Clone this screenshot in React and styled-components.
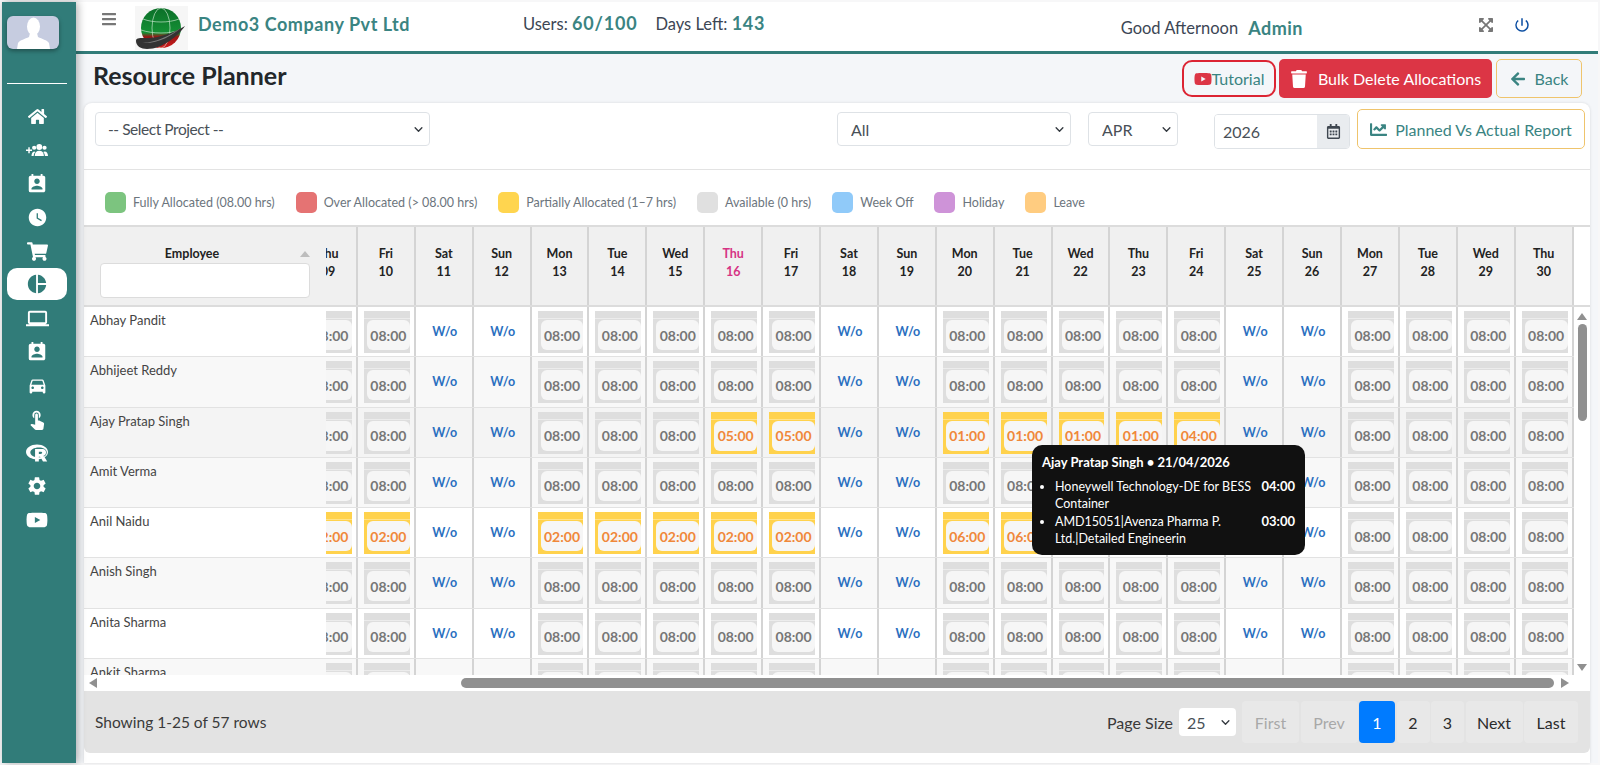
import React from 'react';
import styled, { createGlobalStyle } from 'styled-components';
import { FaHome, FaShoppingCart, FaRProject, FaYoutube, FaExpandArrowsAlt, FaTrash, FaArrowLeft, FaBars, FaRegCalendarAlt, FaChartLine } from 'react-icons/fa';
import { MdPermContactCalendar, MdWatchLater, MdPieChart, MdLaptop, MdDirectionsCar, MdTouchApp, MdSettings, MdPowerSettingsNew } from 'react-icons/md';

const TEAL = '#317c79';
const TEAL_TEXT = '#3a8482';
const ROW_HEIGHT = 50.3;
const chevron = `url("data:image/svg+xml,%3csvg xmlns='http://www.w3.org/2000/svg' viewBox='0 0 16 16'%3e%3cpath fill='none' stroke='%23343a40' stroke-linecap='round' stroke-linejoin='round' stroke-width='2.4' d='m2 5 6 6 6-6'/%3e%3c/svg%3e")`;

const GlobalStyle = createGlobalStyle`
  html, body { margin: 0; height: 765px; overflow: hidden; }
  body { background: #f7f7f8; font-family: "Lato", "Noto Sans", sans-serif; color: #343a40; }
  * { box-sizing: border-box; }
`;

const Page = styled.div`
  display: flex;
  height: 765px;
  padding: 2px 2px 2px 2px;
`;

const Sidebar = styled.aside`
  width: 74px;
  flex: none;
  background: ${TEAL};
  padding: 14px 9px 0 5px;
  box-shadow: 2px 0 8px rgba(0, 0, 0, 0.3);
  position: relative;
  z-index: 3;
`;

const Avatar = styled.div`
  width: 52px;
  height: 33px;
  background: #c6cce0;
  border-radius: 6px;
  box-shadow: 0 2px 4px rgba(0, 0, 0, 0.35);
  overflow: hidden;
  display: flex;
`;

const SideRule = styled.div`
  height: 1px;
  background: #fff;
  margin-top: 34px;
  margin-bottom: 16px;
`;

const NavItem = styled.div`
  height: ${p => (p.$active ? '32px' : '33.6px')};
  margin-bottom: ${p => (p.$active ? '1.6px' : '0')};
  display: flex;
  align-items: center;
  justify-content: center;
  color: ${p => (p.$active ? TEAL : '#fff')};
  background: ${p => (p.$active ? '#fff' : 'transparent')};
  border-radius: 10px;
  font-size: 20px;
`;

const Main = styled.div`
  flex: 1;
  min-width: 0;
  display: flex;
  flex-direction: column;
  background: #f4f6f9;
`;

const TopBar = styled.header`
  height: 52px;
  flex: none;
  display: flex;
  align-items: flex-start;
  background: #fff;
  border-bottom: 3px solid ${TEAL};
  padding-left: 25px;
`;

const MenuButton = styled.div`
  color: #777;
  font-size: 16px;
  margin-top: 9px;
  display: flex;
`;

const Logo = styled.div`
  width: 53px;
  height: 44px;
  margin: 4px 0 0 18px;
  background: #f6f6f6;
  display: flex;
`;

const Company = styled.div`
  margin: 11px 0 0 10px;
  font-size: 18px;
  line-height: 22px;
  font-weight: 700;
  letter-spacing: 0.55px;
  color: ${TEAL_TEXT};
  white-space: nowrap;
`;

const Stats = styled.div`
  margin: 9px 0 0 113px;
  display: flex;
  gap: 18px;
  font-size: 16.5px;
  line-height: 24px;
  color: #3c4654;
`;

const Strong = styled.b`
  color: ${TEAL_TEXT};
  font-size: 18px;
  font-weight: 700;
  letter-spacing: 0.5px;
`;

const StatValue = styled(Strong)`
  letter-spacing: 0.8px;
`;

const Greeting = styled.div`
  margin: 14px 0 0 auto;
  font-size: 16.5px;
  line-height: 24px;
  color: #3c4654;
  white-space: nowrap;
  display: flex;
  gap: 10px;
`;

const HeaderIcons = styled.div`
  margin: 14px 67px 0 175px;
  display: flex;
  gap: 19px;
  align-items: center;
  font-size: 16px;
`;

const TitleRow = styled.div`
  height: 49px;
  flex: none;
  display: flex;
  align-items: center;
  padding: 0 16px 0 17px;
`;

const Title = styled.h1`
  margin: 0 auto 7px 0;
  font-size: 25px;
  font-weight: 700;
  color: #22272b;
`;

const TutorialButton = styled.button`
  width: 94px;
  height: 37px;
  border: 2px solid #dc2433;
  border-radius: 10px;
  background: #f4f6f9;
  color: ${TEAL_TEXT};
  font: 400 16px "Lato", sans-serif;
  display: flex;
  align-items: center;
  justify-content: center;
  padding: 0;
  margin-right: 3px;
  svg { color: #dc3545; font-size: 18px; }
`;

const DangerButton = styled.button`
  width: 213px;
  height: 39px;
  border: 0;
  border-radius: 5px;
  background: #dc3545;
  color: #fff;
  font: 400 16px "Lato", sans-serif;
  display: flex;
  align-items: center;
  justify-content: center;
  gap: 10px;
  margin-right: 4px;
  svg { font-size: 18px; }
`;

const OutlineButton = styled.button`
  height: ${p => p.$h || 39}px;
  width: ${p => p.$w}px;
  border: 1px solid #efc46c;
  border-radius: 5px;
  background: ${p => p.$bg || '#f4f6f9'};
  color: ${TEAL_TEXT};
  font: 400 16px "Lato", sans-serif;
  display: flex;
  align-items: center;
  justify-content: center;
  gap: ${p => p.$gap || 9}px;
  padding: 0;
  flex: none;
`;

const Card = styled.section`
  flex: 1;
  min-height: 0;
  margin: 0 8px;
  background: #fff;
  border-radius: 8px 8px 0 0;
  box-shadow: 0 0 3px rgba(0, 0, 0, 0.12);
  position: relative;
  overflow: hidden;
`;

const Toolbar = styled.div`
  height: 67px;
  display: flex;
  align-items: flex-start;
  padding: 6px 5px 0 11px;
  border-bottom: 1px solid #e3e3e3;
`;

const Select = styled.select`
  appearance: none;
  height: 34px;
  width: ${p => p.$w}px;
  margin: ${p => p.$m || '3px 0 0 0'};
  padding: 0 20px 0 13px;
  border: 1px solid #dee2e6;
  border-radius: 4px;
  color: #495057;
  background: #fff ${chevron} no-repeat right 5px center / 11px 9px;
  font: 400 16px "Lato", sans-serif;
  flex: none;
`;

const ProjectSelect = styled(Select)`
  padding-left: 12px;
  font-size: 15.5px;
  letter-spacing: -0.45px;
`;

const PageSizeSelect = styled(Select)`
  height: 28px;
  margin: 0;
  padding: 0 0 0 8px;
  border: 0;
`;

const DateGroup = styled.div`
  margin: 5px 7px 0 36px;
  width: 136px;
  height: 35px;
  display: flex;
  flex: none;
  border: 1px solid #dee2e6;
  border-radius: 4px;
  overflow: hidden;
`;

const DateInput = styled.input`
  width: 102px;
  border: 0;
  padding: 0 0 0 8px;
  color: #495057;
  font: 400 16px "Lato", sans-serif;
  outline: none;
`;

const DateAddon = styled.div`
  flex: 1;
  background: #e9ecef;
  color: #3f4750;
  display: flex;
  align-items: center;
  justify-content: center;
  font-size: 15px;
`;

const Legend = styled.div`
  height: 55px;
  display: flex;
  align-items: center;
  gap: 21px;
  padding: 9px 0 0 21px;
`;

const LegendItem = styled.div`
  display: flex;
  align-items: center;
  gap: 7px;
  font-size: 12.5px;
  color: #6c757d;
  white-space: nowrap;
`;

const Swatch = styled.span`
  width: 21px;
  height: 21px;
  border-radius: 5px;
  background: ${p => p.$c};
`;

const Grid = styled.div`
  display: flex;
  height: 450px;
  border-top: 2px solid #dcdcdc;
  overflow: hidden;
`;

const Frozen = styled.div`
  width: 242px;
  flex: none;
  position: relative;
  z-index: 2;
  box-shadow: inset 6px 0 6px -6px rgba(0, 0, 0, 0.18);
`;

const EmployeeHead = styled.div`
  height: 80px;
  background: #f0f0f0;
  border-bottom: 2px solid #dcdcdc;
  padding: 18px 16px 0 16px;
  position: relative;
`;

const HeadLabel = styled.div`
  text-align: center;
  padding-right: 26px;
  font-size: 12.5px;
  font-weight: 700;
  line-height: 18px;
  color: #222;
`;

const SortCaret = styled.span`
  position: absolute;
  top: 24px;
  right: 16px;
  border-left: 5px solid transparent;
  border-right: 5px solid transparent;
  border-bottom: 6px solid #bdbdbd;
`;

const SearchBox = styled.input`
  display: block;
  width: 100%;
  height: 35px;
  border: 1px solid #dcdcdc;
  border-radius: 4px;
  background: #fff;
`;

const NameCell = styled.div`
  height: ${ROW_HEIGHT}px;
  padding: 4px 10px 4px 6px;
  background: ${p => p.$bg};
  border-bottom: 1px solid #e2e2e2;
  font-size: 13px;
  line-height: 18px;
  color: #444;
`;

const DaysPane = styled.div`
  width: 1248px;
  flex: none;
  overflow: hidden;
`;

const DaysTrack = styled.div`
  width: ${22 * 57.9}px;
  margin-left: -26px;
`;

const HeadRow = styled.div`
  display: flex;
  height: 80px;
  background: #f0f0f0;
  border-bottom: 2px solid #dcdcdc;
`;

const HeadCell = styled.div`
  width: 57.9px;
  flex: none;
  padding-top: 18px;
  text-align: center;
  font-size: 12.5px;
  font-weight: 700;
  line-height: 18px;
  color: ${p => (p.$today ? '#d63384' : '#222')};
  border-right: 2px solid #d4d4d4;
`;

const BodyRow = styled.div`
  display: flex;
  height: ${ROW_HEIGHT}px;
  background: ${p => p.$bg};
  border-bottom: 1px solid #e2e2e2;
`;

const DayCell = styled.div`
  width: 57.9px;
  flex: none;
  border-right: 2px solid #d4d4d4;
  padding: 4px 4px 0 6px;
  display: flex;
  justify-content: center;
`;

const Hours = styled.div`
  width: 46px;
  height: 42px;
  padding: 9px 0 3px 3px;
  display: flex;
  background: linear-gradient(${p => p.$tone} 0 7px, ${p => p.$line} 7px 8px, ${p => p.$tone} 8px);
`;

const HoursInner = styled.div`
  flex: 1;
  display: flex;
  align-items: center;
  justify-content: center;
  background: #f6f6f6;
  border-radius: 6px;
  font-size: 14px;
  font-weight: 700;
  color: ${p => p.$ink};
`;

const WeekOff = styled.div`
  margin-top: 12px;
  font-size: 12.5px;
  line-height: 18px;
  font-weight: 700;
  color: #2a6fc0;
`;

const VBar = styled.div`
  width: 16px;
  flex: none;
  display: flex;
  flex-direction: column;
  align-items: center;
`;

const VCorner = styled.div`
  height: 80px;
  width: 100%;
  flex: none;
  border-bottom: 2px solid #dcdcdc;
  margin-bottom: 6px;
`;

const Arrow = styled.span`
  flex: none;
  width: 0;
  height: 0;
  border-style: solid;
  border-color: transparent;
  ${p => p.$dir === 'up' && 'border-width: 0 5px 7px; border-bottom-color: #909090;'}
  ${p => p.$dir === 'down' && 'border-width: 7px 5px 0; border-top-color: #909090; margin-top: auto; margin-bottom: 4px;'}
  ${p => p.$dir === 'left' && 'border-width: 5px 8px 5px 0; border-right-color: #909090;'}
  ${p => p.$dir === 'right' && 'border-width: 5px 0 5px 8px; border-left-color: #909090;'}
`;

const VThumb = styled.div`
  width: 9px;
  height: 97px;
  margin-top: 4px;
  border-radius: 5px;
  background: #909090;
`;

const HBar = styled.div`
  height: 16px;
  display: flex;
  align-items: center;
  padding: 0 21px 0 5px;
`;

const HThumb = styled.div`
  width: 1093px;
  height: 10px;
  margin: 0 7px 0 auto;
  border-radius: 5px;
  background: #909090;
`;

const Footer = styled.div`
  height: 62px;
  background: #e3e3e3;
  border-radius: 0 0 6px 6px;
  display: flex;
  align-items: center;
  padding: 0 12px 0 11px;
`;

const RowCount = styled.div`
  font-size: 15.5px;
  color: #3a3a3a;
  margin-right: auto;
`;

const PageLabel = styled.span`
  font-size: 16px;
  color: #3a3a3a;
  margin-right: 6px;
`;

const Pager = styled.div`
  display: flex;
  gap: 1.5px;
  margin-left: 6px;
`;

const PageButton = styled.button`
  width: ${p => p.$w}px;
  height: 42px;
  border: 0;
  border-radius: 4px;
  padding: 0;
  background: ${p => (p.$active ? '#007bff' : '#e8e8e8')};
  color: ${p => (p.$active ? '#fff' : p.$off ? '#a8a8a8' : '#2b2b2b')};
  font: 400 16px "Lato", sans-serif;
`;

const Tooltip = styled.div`
  position: absolute;
  left: 948px;
  top: 342px;
  width: 273px;
  height: 110px;
  padding: 8px 10px;
  border-radius: 10px;
  background: #111;
  color: #fff;
  font-size: 13px;
  line-height: 18px;
  z-index: 5;
`;

const TipTitle = styled.div`
  font-weight: 700;
  margin-bottom: 7px;
`;

const TipList = styled.ul`
  margin: 0;
  padding: 0 0 0 13px;
  font-size: 12.5px;
  line-height: 17.4px;
`;

const TipLine = styled.div`
  display: flex;
  justify-content: space-between;
  align-items: flex-start;
  gap: 5px;
  b { flex: none; font-size: 13px; }
`;

function GroupAddIcon() {
  return (
    <svg viewBox="0 0 24 16" width="22" height="15" fill="currentColor">
      <path d="M0 7h2.5V4.5h1.6V7h2.5v1.6H4.1v2.5H2.5V8.6H0z" />
      <circle cx="14.5" cy="4.2" r="3.2" />
      <circle cx="20.2" cy="5" r="2.3" />
      <circle cx="8.9" cy="5" r="2.3" />
      <path d="M9.5 14c0-3.6 2-5.6 5-5.6s5 2 5 5.6z" />
      <path d="M20.6 14H24c0-3-1.4-5-3.6-5-.7 0-1.2.2-1.7.5 1.2 1.1 1.9 2.6 1.9 4.5z" />
      <path d="M8.4 14H6c0-2.6 1-4.6 2.9-5 .5 0 1 .2 1.4.5-1.2 1.1-1.9 2.6-1.9 4.5z" />
    </svg>
  );
}

const NAV = [
  { Icon: FaHome, size: 19 },
  { Icon: GroupAddIcon },
  { Icon: MdPermContactCalendar, size: 22 },
  { Icon: MdWatchLater, size: 21 },
  { Icon: FaShoppingCart, size: 21 },
  { Icon: MdPieChart, size: 22, active: true },
  { Icon: MdLaptop, size: 23 },
  { Icon: MdPermContactCalendar, size: 22 },
  { Icon: MdDirectionsCar, size: 21 },
  { Icon: MdTouchApp, size: 22 },
  { Icon: FaRProject, size: 22 },
  { Icon: MdSettings, size: 22 },
  { Icon: FaYoutube, size: 22 },
];

const LEGEND = [
  ['#7cc47f', 'Fully Allocated (08.00 hrs)'],
  ['#e57373', 'Over Allocated (> 08.00 hrs)'],
  ['#ffd54f', 'Partially Allocated (1–7 hrs)'],
  ['#e0e0e0', 'Available (0 hrs)'],
  ['#90caf9', 'Week Off'],
  ['#ce93d8', 'Holiday'],
  ['#ffcc80', 'Leave'],
];

const WEEK = ['Thu', 'Fri', 'Sat', 'Sun', 'Mon', 'Tue', 'Wed'];
const DAYS = Array.from({ length: 22 }, (_, i) => {
  const name = WEEK[i % 7];
  return { name, date: String(i + 9).padStart(2, '0'), off: name === 'Sat' || name === 'Sun', today: i + 9 === 16 };
});

const ROWS = [
  { name: 'Abhay Pandit', bg: '#fff' },
  { name: 'Abhijeet Reddy', bg: '#f8f8f8' },
  { name: 'Ajay Pratap Singh', bg: '#f4f4f4', hours: { 16: '05:00', 17: '05:00', 20: '01:00', 21: '01:00', 22: '01:00', 23: '01:00', 24: '04:00' } },
  { name: 'Amit Verma', bg: '#f8f8f8' },
  { name: 'Anil Naidu', bg: '#fff', hours: { 9: '02:00', 10: '02:00', 13: '02:00', 14: '02:00', 15: '02:00', 16: '02:00', 17: '02:00', 20: '06:00', 21: '06:00' } },
  { name: 'Anish Singh', bg: '#f8f8f8' },
  { name: 'Anita Sharma', bg: '#fff' },
  { name: 'Ankit Sharma', bg: '#f8f8f8' },
];

function Silhouette() {
  return (
    <svg viewBox="0 0 52 33" width="52" height="33">
      <ellipse cx="26.5" cy="10.5" rx="6.5" ry="9" fill="#fff" />
      <path d="M23 17h7l1 4c4 2 9 3 11 6l1 6H10l1-6c2-3 7-4 11-6z" fill="#fff" />
    </svg>
  );
}

function CompanyLogo() {
  return (
    <svg viewBox="0 0 53 44" width="53" height="44">
      <defs>
        <linearGradient id="globe" x1="0" y1="0" x2="0" y2="1">
          <stop offset="0" stopColor="#0b6f28" />
          <stop offset="0.62" stopColor="#149035" />
          <stop offset="0.72" stopColor="#9a1515" />
          <stop offset="1" stopColor="#d01c1c" />
        </linearGradient>
      </defs>
      <circle cx="26" cy="22" r="20" fill="url(#globe)" />
      <g fill="none" stroke="#dff3e2" strokeWidth="0.7" opacity="0.85">
        <ellipse cx="26" cy="22" rx="9" ry="20" />
        <path d="M8 13c10 4 26 4 36 0M6 24c12 4 28 4 40 0" />
      </g>
      <path d="M1 35c0-3 3-3 7-3 14 1 30-5 42-12-6 9-22 23-38 23-6 0-11-3-11-8z" fill="#333" />
      <path d="M3 36c10 3 30-4 44-15-12 11-30 19-44 15z" fill="#7d7d7d" />
    </svg>
  );
}

function DayValue({ day, row }) {
  if (day.off) return <WeekOff>W/o</WeekOff>;
  const value = row.hours && row.hours[Number(day.date)];
  return (
    <Hours $tone={value ? '#ffd24d' : '#dedede'} $line={value ? '#ffe289' : '#ececec'}>
      <HoursInner $ink={value ? '#f0883a' : '#777'}>{value || '08:00'}</HoursInner>
    </Hours>
  );
}

export default function App() {
  return (
    <>
      <GlobalStyle />
      <Page>
        <Sidebar>
          <Avatar><Silhouette /></Avatar>
          <SideRule />
          {NAV.map(({ Icon, size, active }, i) => (
            <NavItem key={i} $active={active}><Icon size={size} /></NavItem>
          ))}
        </Sidebar>
        <Main>
          <TopBar>
            <MenuButton><FaBars /></MenuButton>
            <Logo><CompanyLogo /></Logo>
            <Company>Demo3 Company Pvt Ltd</Company>
            <Stats>
              <span>Users: <StatValue>60/100</StatValue></span>
              <span>Days Left: <StatValue>143</StatValue></span>
            </Stats>
            <Greeting>Good Afternoon <Strong>Admin</Strong></Greeting>
            <HeaderIcons>
              <FaExpandArrowsAlt color="#777" />
              <MdPowerSettingsNew color="#0b4ea2" size={18} />
            </HeaderIcons>
          </TopBar>
          <TitleRow>
            <Title>Resource Planner</Title>
            <TutorialButton><FaYoutube />Tutorial</TutorialButton>
            <DangerButton><FaTrash />Bulk Delete Allocations</DangerButton>
            <OutlineButton $w={86}><FaArrowLeft />Back</OutlineButton>
          </TitleRow>
          <Card>
            <Toolbar>
              <ProjectSelect $w={335} defaultValue="">
                <option value="">-- Select Project --</option>
              </ProjectSelect>
              <Select $w={234} $m="3px 17px 0 auto"><option>All</option></Select>
              <Select $w={90}><option>APR</option></Select>
              <DateGroup>
                <DateInput defaultValue="2026" />
                <DateAddon><FaRegCalendarAlt /></DateAddon>
              </DateGroup>
              <OutlineButton $w={228} $h={40} $bg="#fff" $gap={8}><FaChartLine size={17} />Planned Vs Actual Report</OutlineButton>
            </Toolbar>
            <Legend>
              {LEGEND.map(([color, label]) => (
                <LegendItem key={label}><Swatch $c={color} />{label}</LegendItem>
              ))}
            </Legend>
            <Grid>
              <Frozen>
                <EmployeeHead>
                  <HeadLabel>Employee</HeadLabel>
                  <SortCaret />
                  <SearchBox />
                </EmployeeHead>
                {ROWS.map(row => <NameCell key={row.name} $bg={row.bg}>{row.name}</NameCell>)}
              </Frozen>
              <DaysPane>
                <DaysTrack>
                  <HeadRow>
                    {DAYS.map(day => (
                      <HeadCell key={day.date} $today={day.today}>{day.name}<br />{day.date}</HeadCell>
                    ))}
                  </HeadRow>
                  {ROWS.map(row => (
                    <BodyRow key={row.name} $bg={row.bg}>
                      {DAYS.map(day => <DayCell key={day.date}><DayValue day={day} row={row} /></DayCell>)}
                    </BodyRow>
                  ))}
                </DaysTrack>
              </DaysPane>
              <VBar>
                <VCorner />
                <Arrow $dir="up" />
                <VThumb />
                <Arrow $dir="down" />
              </VBar>
            </Grid>
            <HBar>
              <Arrow $dir="left" />
              <HThumb />
              <Arrow $dir="right" />
            </HBar>
            <Footer>
              <RowCount>Showing 1-25 of 57 rows</RowCount>
              <PageLabel>Page Size</PageLabel>
              <PageSizeSelect $w={57}><option>25</option></PageSizeSelect>
              <Pager>
                <PageButton $w={57} $off>First</PageButton>
                <PageButton $w={57} $off>Prev</PageButton>
                <PageButton $w={36} $active>1</PageButton>
                <PageButton $w={33}>2</PageButton>
                <PageButton $w={33}>3</PageButton>
                <PageButton $w={57}>Next</PageButton>
                <PageButton $w={54}>Last</PageButton>
              </Pager>
            </Footer>
            <Tooltip>
              <TipTitle>Ajay Pratap Singh • 21/04/2026</TipTitle>
              <TipList>
                <li><TipLine><span>Honeywell Technology-DE for BESS Container</span><b>04:00</b></TipLine></li>
                <li><TipLine><span>AMD15051|Avenza Pharma P. Ltd.|Detailed Engineerin</span><b>03:00</b></TipLine></li>
              </TipList>
            </Tooltip>
          </Card>
        </Main>
      </Page>
    </>
  );
}
